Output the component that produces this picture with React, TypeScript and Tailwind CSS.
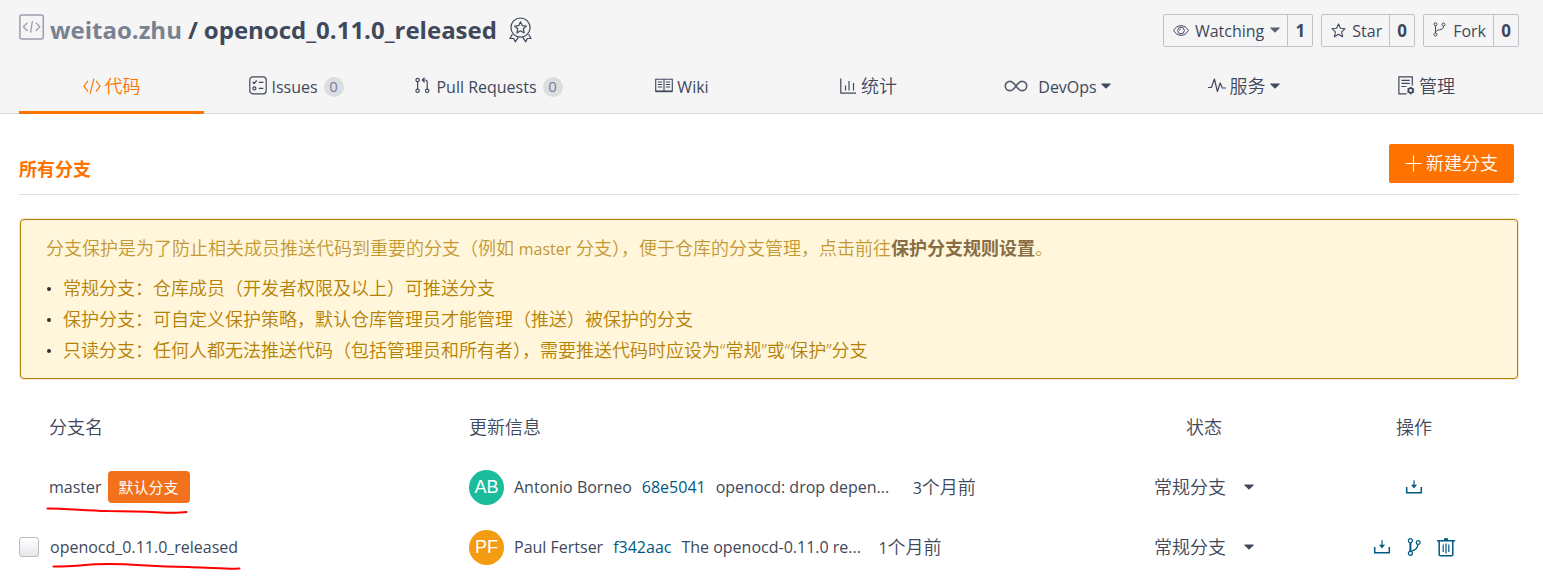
import type { ReactNode } from 'react';

type IconProps = { className?: string };

const Caret = ({ className = '' }: IconProps) => (
  <svg className={`h-[6px] w-[10px] shrink-0 ${className}`} viewBox="0 0 10 6" fill="currentColor" aria-hidden="true">
    <path d="M0.6 0.5h8.8c.4 0 .5.4.3.7L5.5 5.2a.7.7 0 0 1-1 0L.3 1.2C.1.9.2.5.6.5z" />
  </svg>
);

const RepoIcon = () => (
  <svg className="mb-[6px] h-[26px] w-[26px] shrink-0 text-[#9a9db0]" viewBox="0 0 26 26" fill="none" stroke="currentColor" strokeWidth="1.5" aria-hidden="true">
    <rect x="0.9" y="0.9" width="23.4" height="24" rx="2" />
    <path d="M8.500 8.600 4.400 12.800l4.100 4.200M16.800 8.600l4 4.200-4 4.200M13.400 7l-1.800 11.600" strokeWidth="1.300" />
  </svg>
);

const MedalIcon = () => (
  <svg className="h-[26px] w-[23px] shrink-0 text-[#40485b]" viewBox="0 0 23 26" fill="none" stroke="currentColor" strokeWidth="1.2" strokeLinejoin="round" aria-hidden="true">
    <circle cx="11.500" cy="10.600" r="9.600" />
    <path d="m11.500 4.800 1.700 3.800 4.100.4-3 2.800.8 4.100-3.600-2.100-3.600 2.100.8-4.100-3-2.800 4.100-.4z" />
    <path d="M3.400 17.300 1 21.400l3.700.1 1.500 3.300 3.200-4.600M19.600 17.300l2.400 4.100-3.700.1-1.500 3.300-3.200-4.600" />
  </svg>
);

const CodeIcon = () => (
  <svg className="h-[18px] w-[18px] shrink-0" viewBox="0 0 18 18" fill="none" stroke="currentColor" strokeWidth="1.1" aria-hidden="true">
    <path d="M5 3.8.9 9.2 5 14.6M13 3.8l4.1 5.4-4.1 5.4M10.900 1.600 7.100 16.800" />
  </svg>
);

const IssuesIcon = () => (
  <svg className="h-[19px] w-[18px] shrink-0" viewBox="0 0 18 19" fill="none" stroke="currentColor" strokeWidth="1.2" aria-hidden="true">
    <rect x="0.8" y="0.8" width="16.4" height="17" rx="3" />
    <path d="m3.6 6 1.5 1.5 2.600-3M9.800 6.300h4.600M9.800 12.400h4.600" />
    <circle cx="5.400" cy="12.400" r="1.500" />
  </svg>
);

const PullIcon = () => (
  <svg className="mr-[2px] h-[17px] w-[15px] shrink-0" viewBox="0 0 15 17" fill="none" stroke="currentColor" strokeWidth="1.2" aria-hidden="true">
    <circle cx="2.600" cy="3" r="1.700" />
    <circle cx="2.600" cy="13.800" r="1.700" />
    <circle cx="12.200" cy="13.800" r="1.700" />
    <path d="M2.600 4.700v7.400M12.200 12.100V5.200c0-1.400-.7-2.200-2-2.200H7.400M9.600.8 7.300 3l2.300 2.200" />
  </svg>
);

const WikiIcon = () => (
  <svg className="h-[15px] w-[18px] shrink-0" viewBox="0 0 18 15" fill="none" stroke="currentColor" strokeWidth="1.1" aria-hidden="true">
    <path d="M.7 1.2h16.600v12H.7zM9 1.200v12.400M2.800 4h4.400M2.800 6.500h4.400M2.800 9h4.400M10.800 4h4.400M10.800 6.500h4.400M10.800 9h4.400" />
    <path d="M.7 13.400H17.300" strokeWidth="1.600" />
  </svg>
);

const ChartIcon = () => (
  <svg className="mr-px h-[16px] w-[16px] shrink-0" viewBox="0 0 16 16" fill="none" stroke="currentColor" strokeWidth="1.2" aria-hidden="true">
    <path d="M.8.500v14.700H16M5.500 12.500V7.500M9 12.500V3M13.500 12.500V5" />
  </svg>
);

const DevOpsIcon = () => (
  <svg className="mr-[6px] h-[12px] w-[24px] shrink-0 text-[#5c6172]" viewBox="0 0 24 12" fill="none" stroke="currentColor" strokeWidth="1.7" aria-hidden="true">
    <path d="M12 6C10 3.300 8.700 1.300 6 1.300a4.700 4.700 0 0 0 0 9.400C8.700 10.700 10 8.700 12 6s3.300-4.700 6-4.700a4.700 4.700 0 0 1 0 9.400C15.300 10.700 14 8.700 12 6z" />
  </svg>
);

const PulseIcon = () => (
  <svg className="h-[15px] w-[18px] shrink-0" viewBox="0 0 18 15" fill="none" stroke="currentColor" strokeWidth="1.2" strokeLinejoin="round" aria-hidden="true">
    <path d="M0 9.500h3.400L6.400 1l3 12.500 2.800-8.500 2.200 5H18" />
  </svg>
);

const ManageIcon = () => (
  <svg className="h-[19px] w-[17px] shrink-0" viewBox="0 0 17 19" fill="none" stroke="currentColor" strokeWidth="1.2" aria-hidden="true">
    <path d="M8.600 17.800H.9V.9h13.400v8.600M3.400 4.300h8.400M3.400 7.400h8.400M3.400 10.500h5" />
    <circle cx="12.700" cy="14.500" r="2.300" strokeWidth="1.700" />
    <path d="M12.700 10.800v1.300M12.700 17v1.400M9.500 12.700l1.100.6M14.800 15.800l1.200.6M15.900 12.700l-1.100.6M10.600 15.800l-1.200.6" />
  </svg>
);

const EyeIcon = () => (
  <svg className="h-[11px] w-[16px] shrink-0" viewBox="0 0 16 11" fill="none" stroke="currentColor" strokeWidth="1" aria-hidden="true">
    <path d="M.6 5.500C2.300 2.300 5 .7 8 .7s5.700 1.600 7.400 4.800C13.700 8.700 11 10.300 8 10.300S2.300 8.700.6 5.500z" />
    <circle cx="8" cy="5.500" r="3.300" />
    <path d="M6.500 5.600A1.600 1.600 0 0 1 8 4" strokeWidth=".8" />
  </svg>
);

const StarIcon = () => (
  <svg className="h-[15px] w-[15px] shrink-0" viewBox="0 0 15 15" fill="none" stroke="currentColor" strokeWidth="1.1" strokeLinejoin="round" aria-hidden="true">
    <path d="m7.500 1 1.900 4.200 4.700.5-3.500 3.200 1 4.800-4.100-2.400-4.100 2.400 1-4.800L.9 5.700l4.700-.5z" />
  </svg>
);

const ForkIcon = () => (
  <svg className="mr-px mb-[2px] h-[15px] w-[13px] shrink-0" viewBox="0 0 13 15" fill="none" stroke="currentColor" strokeWidth="1" aria-hidden="true">
    <circle cx="2.500" cy="2.300" r="1.500" />
    <circle cx="2.500" cy="12.500" r="1.500" />
    <circle cx="10.500" cy="2.600" r="1.500" />
    <path d="M2.500 3.800V11M10.500 4.200c0 2.600-1.600 3.300-4 3.600-2.200.2-3.600 1-4 3" />
  </svg>
);

const DownloadIcon = () => (
  <svg className="h-[14px] w-[18px]" viewBox="0 0 18 14" fill="none" stroke="currentColor" strokeWidth="1.500" aria-hidden="true">
    <path d="M1.700 7v5.700h14.600V7" />
    <path d="M9 .3V7" strokeWidth="1.200" />
    <path d="M6 4.800h6L9 8.400z" fill="currentColor" stroke="none" />
  </svg>
);

const BranchIcon = () => (
  <svg className="h-[18px] w-[14px]" viewBox="0 0 14 18" fill="none" stroke="currentColor" strokeWidth="1.200" aria-hidden="true">
    <circle cx="3.400" cy="2.700" r="2" />
    <circle cx="3.400" cy="15.300" r="2" />
    <circle cx="11.200" cy="4.500" r="1.900" />
    <path d="M3.400 4.700v8.600" strokeWidth="2" />
    <path d="M11 6.400c-.2 3-1.600 5.500-6.600 6.800" />
  </svg>
);

const TrashIcon = () => (
  <svg className="h-[19px] w-[18px]" viewBox="0 0 18 19" fill="none" stroke="currentColor" strokeWidth="1.500" aria-hidden="true">
    <path d="M0 2.800h18M2.200 3v13.400c0 .9.500 1.400 1.400 1.400h10.800c.9 0 1.400-.5 1.400-1.400V3" />
    <path d="M7 1.300h4" strokeWidth="2.200" />
    <path d="M6.200 6.500v7.500M9 5.500v10M11.800 6.500v7.500" strokeWidth="1.200" />
  </svg>
);

const PlusIcon = () => (
  <svg className="h-[17px] w-[17px] shrink-0" viewBox="0 0 17 17" stroke="currentColor" strokeWidth="1.100" aria-hidden="true">
    <path d="M8.500.5v16M.5 8.500h16" />
  </svg>
);

function Social({ icon, label, count, caret }: { icon: ReactNode; label: string; count: number; caret?: boolean }) {
  return (
    <div className="flex h-[33px] items-stretch rounded-[2px] border border-[#c0c2cc]">
      <button type="button" className="flex items-center gap-[6px] pr-[7px] pl-[9px]">
        {icon}
        <span className="pt-[2px]">{label}</span>
        {caret && <Caret className="text-[#5c6172]" />}
      </button>
      <a href="#count" className="flex w-[25px] items-center justify-center border-l border-[#c0c2cc] pt-[2px] text-[17px] font-bold">
        {count}
      </a>
    </div>
  );
}

function Tab({ icon, label, cjk, count, caret, active }: { icon: ReactNode; label: string; cjk?: boolean; count?: number; caret?: boolean; active?: boolean }) {
  return (
    <a
      href="#tab"
      aria-current={active ? 'page' : undefined}
      className={`flex h-[54px] items-center justify-center gap-1 border-b-3 ${active ? 'border-[#fe7300] text-[#fe7300]' : 'border-transparent'}`}
    >
      {icon}
      <span className={cjk ? 'pt-[2px] text-[18px] font-[350]' : 'pt-[2px]'}>{label}</span>
      {count !== undefined && (
        <span className="mt-[2px] ml-[2px] flex h-5 w-5 items-center justify-center rounded-full bg-[#dcdddf] text-[15px] text-[#7480a0]">{count}</span>
      )}
      {caret && <Caret />}
    </a>
  );
}

function Status({ name }: { name: string }) {
  return (
    <div className="relative inline-block align-middle">
      <select aria-label={`${name} 状态`} className="w-[100px] appearance-none bg-transparent text-[18px] font-[350]">
        <option>常规分支</option>
        <option>保护分支</option>
        <option>只读分支</option>
      </select>
      <Caret className="pointer-events-none absolute top-1/2 right-0 -translate-y-1/2" />
    </div>
  );
}

function Commit({ initials, color, author, hash, message, time }: { initials: string; color: string; author: string; hash: string; message: string; time: string }) {
  return (
    <div className="flex items-center gap-[10px] whitespace-nowrap">
      <span className={`flex size-[35px] items-center justify-center rounded-full font-['Liberation_Sans',sans-serif] text-[18px] text-white ${color}`}>{initials}</span>
      <span>{author}</span>
      <a href="#commit" className="text-[#005980]">{hash}</a>
      <span className="w-[187px]">{message}</span>
      <span>
        {time.charAt(0)}
        <span className="text-[18px] font-[350]">{time.slice(1)}</span>
      </span>
    </div>
  );
}

const action = 'flex items-center justify-center text-[#005980]';

export default function App() {
  return (
    <div className="min-h-screen bg-white font-['Open_Sans','Noto_Sans_CJK_SC',sans-serif] text-[16px] text-[#40485b]">
      <header className="border-b border-[#d9dadd] bg-[#f5f5f5] pr-6 pl-[19px]">
        <div className="flex h-[60px] items-center justify-between">
          <h1 className="flex items-center text-[24px] font-bold">
            <RepoIcon />
            <a href="#owner" className="ml-[5px] text-[#7a8291]">weitao.zhu</a>
            <span className="mx-[6px]">/</span>
            <a href="#repo" className="mr-3">openocd_0.11.0_released</a>
            <MedalIcon />
          </h1>
          <div className="flex gap-2">
            <Social icon={<EyeIcon />} label="Watching" count={1} caret />
            <Social icon={<StarIcon />} label="Star" count={0} />
            <Social icon={<ForkIcon />} label="Fork" count={0} />
          </div>
        </div>
        <nav className="-mb-px grid grid-cols-[185fr_185fr_200fr_186fr_187fr_191fr_181fr_185fr]">
          <Tab icon={<CodeIcon />} label="代码" cjk active />
          <Tab icon={<IssuesIcon />} label="Issues" count={0} />
          <Tab icon={<PullIcon />} label="Pull Requests" count={0} />
          <Tab icon={<WikiIcon />} label="Wiki" />
          <Tab icon={<ChartIcon />} label="统计" cjk />
          <Tab icon={<DevOpsIcon />} label="DevOps" caret />
          <Tab icon={<PulseIcon />} label="服务" cjk caret />
          <Tab icon={<ManageIcon />} label="管理" cjk />
        </nav>
      </header>

      <main className="pr-6 pl-[19px]">
        <div className="flex items-center justify-between border-b border-[#d9e0e6] pt-[30px] pr-[5px] pb-[11px]">
          <h2 className="pt-3 text-[18px] leading-[27px] font-bold text-[#fe7300]">所有分支</h2>
          <button type="button" className="flex h-[39px] items-center gap-1 rounded-[2px] bg-[#fe7300] px-4 text-[18px] font-[350] text-white">
            <PlusIcon />
            新建分支
          </button>
        </div>

        <section className="mx-px mt-6 rounded-[4px] border border-[#b58105] bg-[#fff6db] px-[25px] py-3 text-[18px] font-[350] text-[#b58105] shadow-[0_0_0_1px_#b5810533]">
          <p className="mb-2 leading-8 opacity-80">
            分支保护是为了防止相关成员推送代码到重要的分支（例如 <span className="text-[16px] font-normal">master</span> 分支），便于仓库的分支管理，点击前往
            <a href="#rules" className="font-bold text-[#6b4a1c]">保护分支规则设置</a>。
          </p>
          <ul className="list-none leading-[31px]">
            {[
              '常规分支：仓库成员（开发者权限及以上）可推送分支',
              '保护分支：可自定义保护策略，默认仓库管理员才能管理（推送）被保护的分支',
              '只读分支：任何人都无法推送代码（包括管理员和所有者），需要推送代码时应设为“常规”或“保护”分支',
            ].map((rule) => (
              <li key={rule} className="flex items-center gap-3">
                <span className="ml-px size-1 rounded-full bg-[#333]" />
                {rule}
              </li>
            ))}
          </ul>
        </section>

        <table className="mt-[18px] w-full table-fixed">
          <colgroup>
            <col className="w-[30%]" />
            <col className="w-[42%]" />
            <col className="w-[14%]" />
            <col className="w-[14%]" />
          </colgroup>
          <thead>
            <tr className="h-[60px] text-[18px]">
              <th className="pl-[30px] text-left font-[350]">分支名</th>
              <th className="text-left font-[350]">更新信息</th>
              <th className="text-center font-[350]">状态</th>
              <th className="text-center font-[350]">操作</th>
            </tr>
          </thead>
          <tbody>
            <tr className="h-[60px]">
              <td>
                <div className="relative flex items-center gap-[6px] pl-[30px]">
                  <a href="#master">master</a>
                  <span className="flex h-8 items-center rounded-[4px] bg-[#f2711c] px-[11px] text-[15px] text-white">默认分支</span>
                  <svg className="pointer-events-none absolute top-[36px] left-[27px] h-2 w-[144px]" viewBox="0 0 144 8" fill="none" stroke="#f00" strokeWidth="2" strokeLinecap="round" aria-hidden="true">
                    <path d="M1.500 1.500c14 0 30 1.300 60 2.600 22 .2 38-.2 58 1.700 9 .2 14-.3 21-.8" />
                  </svg>
                </div>
              </td>
              <td>
                <Commit initials="AB" color="bg-[#1abc9c]" author="Antonio Borneo" hash="68e5041" message="openocd: drop depen..." time="3个月前" />
              </td>
              <td className="text-center"><Status name="master" /></td>
              <td>
                <div className="flex justify-center">
                  <button type="button" aria-label="下载" className={action}><DownloadIcon /></button>
                </div>
              </td>
            </tr>
            <tr className="h-[60px]">
              <td>
                <label className="relative flex items-center gap-[11px]">
                  <input type="checkbox" className="size-5 appearance-none rounded-[3px] border border-[#bbb] bg-linear-to-b from-white to-[#e6e7ec] checked:bg-[#fe7300]" />
                  <span>openocd_0.11.0_released</span>
                  <svg className="pointer-events-none absolute top-[27px] left-[33px] h-2 w-[190px]" viewBox="0 0 190 8" fill="none" stroke="#f00" strokeWidth="2" strokeLinecap="round" aria-hidden="true">
                    <path d="M1.500 4.500c18 .5 32-2.500 55-2.500 28-.2 38 2.700 80 3 20 .7 32 2.300 51 1.500" />
                  </svg>
                </label>
              </td>
              <td>
                <Commit initials="PF" color="bg-[#f39c12]" author="Paul Fertser" hash="f342aac" message="The openocd-0.11.0 re..." time="1个月前" />
              </td>
              <td className="text-center"><Status name="openocd_0.11.0_released" /></td>
              <td>
                <div className="flex items-center justify-center gap-4">
                  <button type="button" aria-label="下载" className={action}><DownloadIcon /></button>
                  <button type="button" aria-label="新建分支" className={action}><BranchIcon /></button>
                  <button type="button" aria-label="删除" className={action}><TrashIcon /></button>
                </div>
              </td>
            </tr>
          </tbody>
        </table>
      </main>
    </div>
  );
}
